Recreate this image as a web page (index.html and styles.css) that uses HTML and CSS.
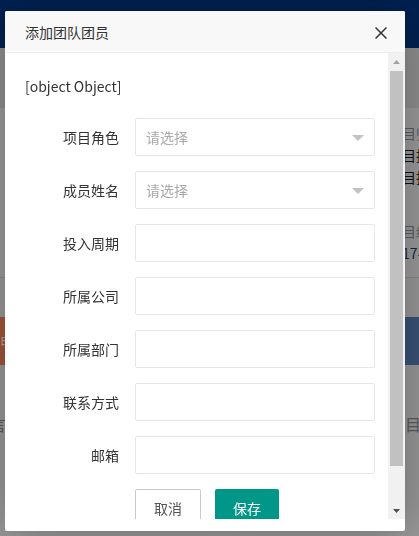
FILE: index.html
```html
<!DOCTYPE html>
<html lang="zh-CN">
<head>
<meta charset="utf-8">
<title>添加团队团员</title>
<link rel="stylesheet" href="styles.css">
</head>
<body>
<div class="page">
  <header class="topbar"></header>
  <div class="subbar"></div>
  <section class="info">
    <div class="info-side">
      <p class="muted">目归属</p>
      <p>目执行</p>
      <p>目执行</p>
      <p class="muted spaced">目经理</p>
      <p class="date">17-</p>
    </div>
  </section>
  <div class="spacer"></div>
  <div class="strip">
    <span class="tab-orange">申</span>
    <span class="tab-blue"></span>
  </div>
  <div class="lower">
    <span class="lower-text">言</span>
    <span class="lower-text">目</span>
  </div>
</div>

<div class="modal">
  <div class="modal-header">
    <span class="modal-title">添加团队团员</span>
    <svg class="modal-close" width="12" height="12" viewBox="0 0 12 12"><path d="M0.5 0.5L11.5 11.5M11.5 0.5L0.5 11.5" stroke="#333" stroke-width="1.5" fill="none"/></svg>
  </div>
  <div class="modal-body">
    <div class="scroll-content">
      <div class="obj-text">[object Object]</div>
      <div class="form-item">
        <label class="form-label">项目角色</label>
        <div class="select"><span class="placeholder">请选择</span><i class="caret"></i></div>
      </div>
      <div class="form-item">
        <label class="form-label">成员姓名</label>
        <div class="select"><span class="placeholder">请选择</span><i class="caret"></i></div>
      </div>
      <div class="form-item">
        <label class="form-label">投入周期</label>
        <input class="input" type="text">
      </div>
      <div class="form-item">
        <label class="form-label">所属公司</label>
        <input class="input" type="text">
      </div>
      <div class="form-item">
        <label class="form-label">所属部门</label>
        <input class="input" type="text">
      </div>
      <div class="form-item">
        <label class="form-label">联系方式</label>
        <input class="input" type="text">
      </div>
      <div class="form-item">
        <label class="form-label">邮箱</label>
        <input class="input" type="text">
      </div>
      <div class="form-actions">
        <button class="btn btn-default">取消</button>
        <button class="btn btn-primary">保存</button>
      </div>
    </div>
    <div class="scrollbar">
      <div class="sb-btn"><svg width="7" height="4" viewBox="0 0 7 4"><path d="M0 4L3.5 0L7 4Z" fill="#a3a3a3"/></svg></div>
      <div class="sb-track"><div class="sb-thumb"></div></div>
      <div class="sb-btn"><svg width="7" height="4" viewBox="0 0 7 4"><path d="M0 0L3.5 4L7 0Z" fill="#505050"/></svg></div>
    </div>
  </div>
</div>
</body>
</html>
```

FILE: styles.css
```css
* { box-sizing: border-box; }
html, body { margin: 0; padding: 0; }
body {
  font-family: "Noto Sans CJK SC", "Microsoft YaHei", sans-serif;
  font-size: 14px;
  color: #333;
  width: 419px;
  height: 536px;
  overflow: hidden;
}

/* background page (already shaded) */
.page {
  display: flex;
  flex-direction: column;
  height: 536px;
  background: #999999;
}
.topbar { flex: none; height: 48px; background: #012152; }
.subbar { flex: none; height: 60px; background: #8f8f8f; }
.info {
  flex: none;
  height: 170px;
  background: #9b9b9b;
  border-bottom: 1px solid #878787;
  display: flex;
  justify-content: flex-end;
}
.info-side {
  width: 17px;
  padding-top: 14px;
  overflow: hidden;
  white-space: nowrap;
}
.info-side p { margin: 0; line-height: 22px; color: #111; }
.info-side p.muted { color: #5e5e5e; }
.info-side p.spaced { margin-top: 32px; }
.info-side p.date { color: #1b2a45; }
.spacer { flex: none; height: 39px; }
.strip {
  flex: none;
  height: 48px;
  display: flex;
  justify-content: space-between;
}
.tab-orange {
  width: 40px;
  background: #a0573a;
  color: #c9a08c;
  line-height: 48px;
  text-align: right;
  padding-right: 29px;
  overflow: hidden;
}
.tab-blue { width: 60px; background: #3a5377; }
.lower {
  flex: none;
  display: flex;
  justify-content: space-between;
  padding-top: 48px;
  line-height: 22px;
  color: #5a5a5a;
  font-size: 16px;
}
.lower-text { width: 14px; overflow: hidden; white-space: nowrap; }
.lower-text:first-child { direction: rtl; width: 6px; }

/* modal */
.modal {
  position: fixed;
  left: 5px;
  top: 11px;
  width: 400px;
  height: 520px;
  background: #fff;
  border-radius: 2px;
  box-shadow: 1px 1px 50px rgba(0, 0, 0, 0.3);
  display: flex;
  flex-direction: column;
  padding-bottom: 12px;
}
.modal-header {
  flex: none;
  height: 42px;
  background: #f8f8f8;
  border-bottom: 1px solid #eeeeee;
  border-radius: 2px 2px 0 0;
  display: flex;
  align-items: center;
  justify-content: space-between;
  padding: 0 18px 0 20px;
}
.modal-title { font-size: 14px; color: #333; }
.modal-close { display: block; margin-top: 2px; }

.modal-body {
  flex: 1;
  display: flex;
  min-height: 0;
}
.scroll-content {
  flex: 1;
  overflow: hidden;
  padding: 22px 13px 36px 20px;
}
.obj-text { line-height: 22px; margin-bottom: 21px; color: #333; }

.form-item {
  display: flex;
  height: 38px;
  margin-bottom: 15px;
}
.form-label {
  width: 110px;
  flex: none;
  padding-right: 16px;
  text-align: right;
  line-height: 38px;
  color: #333;
}
.input, .select {
  flex: 1;
  height: 38px;
  border: 1px solid #e6e6e6;
  border-radius: 2px;
  background: #fff;
  padding: 0 10px;
  font: inherit;
  outline: none;
}
.select {
  display: flex;
  align-items: center;
  justify-content: space-between;
}
.placeholder { color: #a9a9a9; }
.caret {
  width: 0;
  height: 0;
  border-left: 6px solid transparent;
  border-right: 6px solid transparent;
  border-top: 6px solid #c2c2c2;
  margin-top: 2px;
}

.form-actions {
  display: flex;
  gap: 14px;
  padding-left: 110px;
}
.btn {
  height: 38px;
  padding: 0 18px;
  font: inherit;
  font-size: 14px;
  border-radius: 2px;
  line-height: 36px;
}
.btn-default {
  background: #fff;
  border: 1px solid #c9c9c9;
  color: #555;
}
.btn-primary {
  background: #009688;
  border: none;
  color: #fff;
  line-height: 38px;
}

/* scrollbar */
.scrollbar {
  flex: none;
  width: 17px;
  background: #f1f1f1;
  display: flex;
  flex-direction: column;
}
.sb-btn {
  flex: none;
  height: 17px;
  display: flex;
  align-items: center;
  justify-content: center;
}
.sb-btn svg { display: block; }
.sb-track { flex: 1; padding: 1px 2px 0 2px; }
.sb-thumb { height: 395px; background: #c1c1c1; }
```
